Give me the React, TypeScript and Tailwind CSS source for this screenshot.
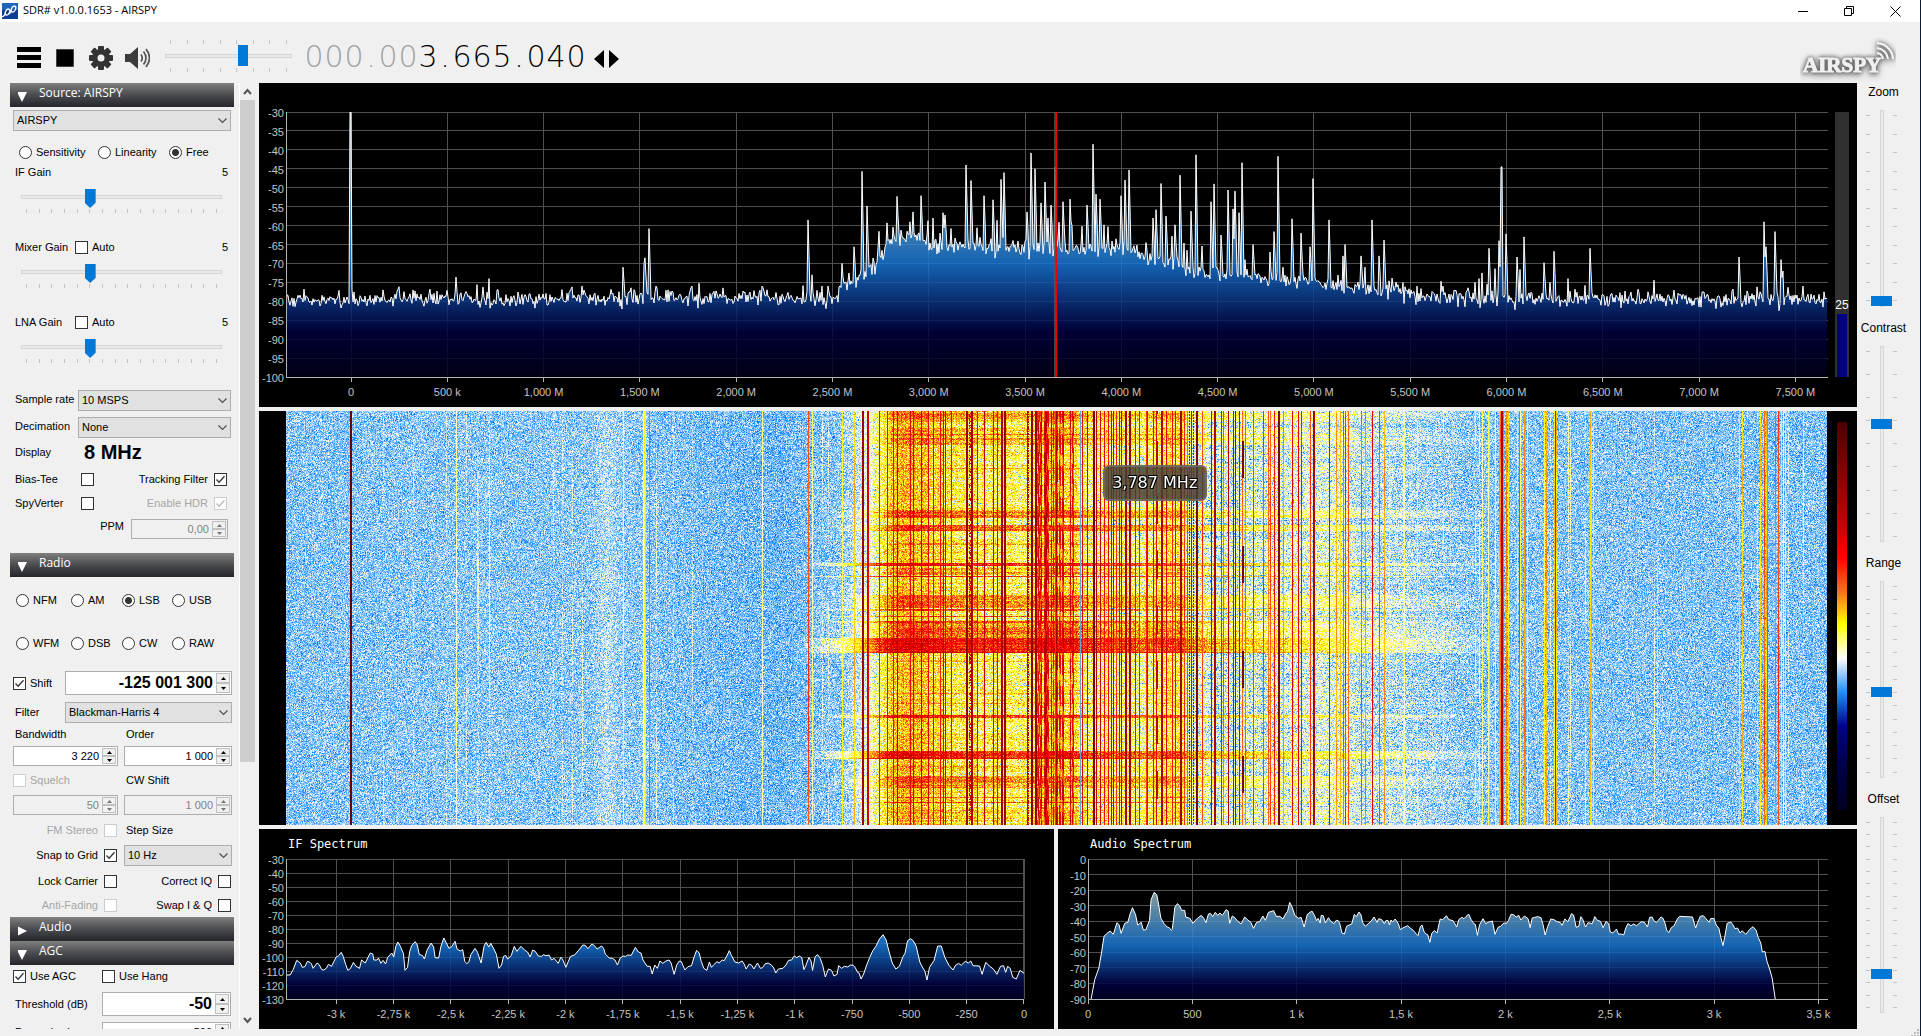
// SDR# main window: source/radio sidebar, spectrum, waterfall, IF and audio views

import React, { useEffect, useMemo, useRef, useState } from 'react';

const PLOT_X = 286;
const PLOT_W = 1542;
const FALL_W = 1541;
const FALL_H = 414;

type Point = [number, number];

// carriers: [column, dB]
const PEAKS: Point[] = [
    [383, -77], [413, -77], [456, -73.6], [477, -75.6], [489, -74], [572, -76.2], [582, -76], [623, -71], [644, -70],
    [645, -68.5], [649, -60.8], [656, -76], [692, -76], [762, -76], [808, -58.5], [812, -73], [822, -76], [828, -76],
    [842, -70], [854, -65.6], [862, -45.7], [867, -54.8], [879, -61.5], [887, -59.3], [893, -60.4], [897, -52.3],
    [910, -59], [913, -56.4], [921, -52.1], [928, -58.7], [933, -58], [940, -62], [943, -56.6], [945, -57.2],
    [951, -60.8], [966, -44], [971, -48.1], [977, -60.6], [984, -52.1], [993, -53.2], [997, -58.6], [1001, -47.8],
    [1004, -46], [1027, -56.4], [1031, -40.8], [1035, -45], [1041, -54], [1045, -48.5], [1048, -58], [1051, -54.6],
    [1055, -44.5], [1059, -59.1], [1063, -53.7], [1070, -53], [1072, -60], [1082, -60.2], [1087, -54.6], [1093, -38.5],
    [1096, -51.7], [1100, -53], [1104, -59.8], [1108, -60.3], [1116, -63.5], [1121, -52.1], [1125, -48], [1129, -45.3],
    [1146, -64.5], [1153, -58], [1156, -55.8], [1161, -48.9], [1166, -57.5], [1172, -62.8], [1175, -59.8], [1180, -46.7],
    [1184, -64.6], [1187, -66.5], [1191, -56.2], [1196, -41.3], [1202, -65.4], [1211, -53.7], [1214, -49],
    [1221, -62.5], [1228, -50.6], [1233, -55.6], [1235, -50.9], [1239, -56.6], [1242, -43.4], [1245, -69], [1253, -65],
    [1270, -67], [1274, -61.6], [1278, -41.7], [1283, -71], [1292, -58.2], [1301, -62], [1310, -65.6], [1313, -47.6],
    [1329, -58.5], [1343, -68], [1345, -65], [1361, -68], [1365, -71], [1372, -58.5], [1379, -68], [1384, -63.8],
    [1389, -74.6], [1403, -75], [1417, -76], [1443, -76], [1475, -75], [1479, -74], [1482, -72.5], [1489, -66],
    [1495, -71.4], [1499, -64], [1501, -44.5], [1506, -62.2], [1517, -68.3], [1520, -71.6], [1524, -63], [1544, -69.8],
    [1550, -75], [1554, -66.8], [1568, -74], [1585, -75.8], [1590, -66], [1654, -74.4], [1739, -68.3], [1757, -76.2],
    [1764, -59], [1766, -65.6], [1775, -61.6], [1781, -69], [1783, -72], [1788, -76.3], [1803, -76],
];

const FLOOR: Point[] = [
    [286, -79.5], [836, -79], [844, -75], [857, -74.5], [869, -72.5], [877, -70], [884, -67], [892, -64], [902, -63],
    [917, -63], [931, -65.3], [1040, -66], [1117, -66], [1142, -68], [1167, -69.5], [1193, -72], [1244, -73.5],
    [1295, -74.5], [1346, -76], [1397, -77.5], [1423, -78.6], [1500, -79.3], [1830, -79.6],
];

const FALL_FLOOR: Point[] = [
    [286, -79.4], [590, -79.2], [607, -77.6], [622, -79], [700, -79.8], [780, -80.2], [840, -79.2], [858, -77],
    [872, -74.5], [884, -70], [892, -66], [905, -65], [922, -66], [950, -69.5], [1030, -72], [1038, -68], [1074, -68],
    [1082, -72], [1150, -72.5], [1168, -69], [1180, -70], [1192, -75], [1250, -76.5], [1345, -76], [1360, -77.5],
    [1400, -78], [1470, -79.3], [1830, -79.6],
];

// columns that only show up in the waterfall
const FAINT: Point[] = [
    [446, -77.5], [456, -75], [466, -77], [478, -76], [489, -77], [553, -77.4], [562, -77], [623, -73.5], [643, -73],
    [644, -70], [645, -72], [649, -66], [656, -75.5], [673, -77], [762, -73.5], [842, -72], [868, -58], [1348, -68],
    [1404, -73], [1488, -72], [1500, -62], [1503, -61], [1508, -68], [1519, -59], [1525, -63], [1527, -70],
    [1546, -64], [1555, -53], [1556, -66], [1570, -74], [1591, -66], [1593, -68], [1657, -77], [1742, -66],
    [1760, -67], [1767, -60], [1778, -58], [1785, -70], [1336, -72], [1340, -74], [1223, -68], [1263, -66],
    [1298, -58], [1268, -69], [1181, -50], [1135, -60], [1139, -62], [1111, -55], [1113, -52], [1119, -57], [1147, -58],
];

// static crashes: [first row, last row, gain in dB]
const BURSTS: [number, number, number][] = [
    [0, 10, 4], [3, 4, 4], [17, 33, 4], [23, 23, 5], [27, 28, 5], [57, 57, 3], [99, 106, 7], [104, 105, 4],
    [114, 119, 8], [132, 133, 5], [138, 142, 2], [152, 154, 15], [157, 163, 5], [165, 165, 15], [184, 196, 7],
    [190, 191, 4], [198, 199, 11], [205, 205, 10], [210, 211, 12], [212, 226, 7], [217, 220, 6], [227, 236, 14],
    [237, 241, 13], [238, 238, 6], [241, 241, 10], [250, 250, 3], [282, 282, 5], [292, 292, 4], [304, 306, 11],
    [340, 346, 13], [347, 347, 15], [352, 360, 3], [365, 376, 6], [370, 371, 4], [386, 386, 7], [391, 391, 9],
    [396, 414, 2],
];

const RAMP: [number, number, number][] = [
    [0, 0, 32], [0, 0, 48], [0, 0, 80], [0, 0, 145], [30, 144, 255], [255, 255, 255], [255, 255, 0],
    [254, 109, 22], [255, 0, 0], [198, 0, 0], [159, 0, 0], [117, 0, 0], [74, 0, 0],
];

const IF_TRACE =
    '62,466 70,466 76,450 83,422 90,430 94,443 99,441 104,425 109,428 112,433 115,446 123,430 127,435 132,450 136,451 141,446 145,434 151,440 156,425 160,413 165,408 170,398 174,410 179,435 183,452 188,447 194,428 199,440 206,446 210,421 217,430 222,415 227,400 232,403 234,421 240,421 243,415 248,431 252,422 257,433 261,413 269,400 273,412 277,380 281,367 286,380 292,402 295,452 300,443 304,396 308,378 315,366 319,376 323,405 329,407 333,418 338,392 346,370 351,382 354,414 361,415 365,382 371,355 376,370 381,386 387,380 393,365 397,388 403,394 408,390 412,425 416,432 420,427 424,405 432,386 437,398 444,430 450,378 454,368 459,382 463,371 469,388 474,404 479,446 484,436 488,410 492,407 496,418 503,408 509,380 514,395 522,380 529,391 535,397 540,412 545,391 550,395 556,409 562,410 566,405 571,408 577,406 582,421 587,416 595,431 600,413 603,417 610,443 615,425 619,410 627,406 635,392 643,376 648,377 653,387 661,373 666,378 671,388 680,379 684,386 687,403 695,415 701,416 706,421 711,436 716,416 722,409 727,410 731,406 738,407 746,383 752,397 757,400 761,421 769,440 775,440 779,463 784,436 789,446 794,424 800,431 806,424 812,421 816,430 822,464 827,436 832,424 836,426 843,451 849,441 856,438 861,412 866,392 871,400 875,425 880,446 886,452 891,427 895,443 899,436 906,426 910,430 916,421 920,423 926,406 930,393 934,407 941,427 948,430 955,424 959,433 963,448 969,433 974,437 978,448 985,430 991,446 995,444 1000,433 1006,430 1013,437 1017,445 1021,460 1026,448 1035,446 1041,436 1046,422 1052,421 1057,409 1062,414 1067,409 1072,414 1076,450 1080,437 1086,413 1090,424 1093,452 1098,411 1103,405 1108,416 1113,438 1118,472 1124,448 1130,452 1135,469 1141,464 1144,438 1150,446 1155,440 1162,442 1167,436 1173,437 1177,445 1181,458 1184,460 1188,478 1193,463 1199,436 1205,413 1211,393 1217,380 1224,358 1231,345 1237,361 1243,397 1249,430 1256,448 1263,440 1270,411 1274,401 1279,363 1285,357 1290,363 1296,380 1303,427 1309,445 1313,455 1317,481 1322,443 1331,422 1338,379 1345,379 1352,413 1360,437 1368,451 1373,437 1379,431 1384,437 1392,425 1398,430 1403,424 1407,438 1420,439 1425,464 1432,428 1440,440 1447,448 1454,464 1461,440 1467,438 1471,458 1475,440 1480,446 1485,473 1492,478 1499,452 1507,461';

const AUDIO_TRACE =
    '81,538 88,480 96,445 101,400 106,350 112,341 118,334 124,344 131,309 135,315 139,341 146,311 152,308 156,285 161,264 167,285 171,316 178,308 182,331 187,330 194,302 197,240 203,218 208,225 211,250 216,296 222,312 228,322 232,324 236,332 238,329 243,262 248,252 252,258 256,272 262,272 264,292 272,296 278,311 285,298 294,287 299,296 303,309 308,283 312,281 316,291 321,278 326,287 330,280 335,287 342,270 346,274 349,311 354,289 359,294 364,304 371,313 378,292 384,301 390,308 395,326 401,308 407,306 413,289 418,302 424,278 434,273 439,290 446,290 452,298 457,283 461,275 465,248 470,263 475,287 482,296 487,293 493,322 499,284 508,274 513,287 517,303 520,296 524,310 526,287 530,288 534,310 540,294 545,306 551,312 555,302 559,303 562,312 566,340 571,343 575,320 580,316 585,313 590,284 594,291 599,277 603,286 606,308 611,320 617,312 623,304 628,292 634,308 637,297 643,300 648,312 651,303 655,302 658,316 661,301 664,307 669,298 675,312 679,330 686,323 693,318 698,325 704,332 708,340 713,348 718,320 721,316 725,337 729,343 732,345 736,368 740,340 745,333 750,340 756,298 761,300 768,288 773,300 781,303 788,322 792,300 798,293 802,297 811,283 816,300 821,312 824,314 828,347 832,316 839,297 844,312 850,307 857,304 862,344 868,323 873,320 879,310 884,311 888,303 893,284 898,285 903,292 908,287 912,301 919,289 926,297 930,324 934,295 939,293 945,291 951,294 955,315 959,346 964,320 970,298 976,300 982,306 988,308 992,317 997,298 1003,306 1010,282 1014,286 1019,323 1024,320 1028,291 1032,300 1037,322 1042,309 1050,312 1055,291 1060,302 1066,305 1071,324 1077,305 1082,313 1085,337 1090,340 1097,328 1101,344 1106,343 1111,346 1115,325 1119,312 1125,318 1130,313 1136,318 1145,306 1151,308 1157,322 1161,293 1166,292 1169,303 1174,308 1178,302 1183,292 1187,296 1191,311 1194,331 1198,339 1203,324 1208,319 1215,297 1219,290 1244,292 1250,325 1254,308 1259,290 1265,288 1270,297 1276,308 1279,297 1285,296 1290,316 1295,326 1299,355 1303,378 1307,346 1311,311 1318,307 1322,315 1326,327 1331,325 1336,340 1340,333 1347,344 1354,330 1361,321 1367,332 1371,353 1376,370 1379,397 1384,395 1388,425 1393,448 1398,475 1404,538';

const createRandom = (seed: number) => () => {
    seed = (seed + 0x6d2b79f5) | 0;
    let t = Math.imul(seed ^ (seed >>> 15), 1 | seed);
    t = (t + Math.imul(t ^ (t >>> 7), 61 | t)) ^ t;
    return ((t ^ (t >>> 14)) >>> 0) / 4294967296;
};

const interpolate = (points: Point[], x: number) => {
    for (let i = 1; i < points.length; i++) {
        if (x <= points[i][0]) {
            const [x0, y0] = points[i - 1];
            const [x1, y1] = points[i];
            return y0 + ((y1 - y0) * (x - x0)) / (x1 - x0);
        }
    }
    return points[points.length - 1][1];
};

const buildSpectrum = () => {
    const random = createRandom(1653);
    const gauss = () => random() + random() + random() - 1.5;
    const levels: number[] = [];
    for (let x = 0; x < PLOT_W; x++) {
        levels.push(interpolate(FLOOR, x + PLOT_X) + gauss() * 2.2 + (random() > 0.95 ? 1.6 : 0));
    }
    PEAKS.forEach(([px, db]) => {
        const x = px - PLOT_X;
        levels[x] = db;
        const floor = interpolate(FLOOR, px);
        if (db > floor + 8) {
            levels[x + 1] = Math.max(levels[x + 1], floor + (db - floor) * 0.55);
        }
    });
    levels[350 - PLOT_X] = -30;
    levels[351 - PLOT_X] = -30;
    levels[1242 - PLOT_X] = -43.4;
    levels[1502 - PLOT_X] = -44.5;
    return levels.map((db, x) => `${x},${(((-30 - db) / 70) * 265).toFixed(1)}`).join(' ');
};

const paintWaterfall = (ctx: CanvasRenderingContext2D) => {
    const random = createRandom(3787);
    const gauss = () => random() + random() + random() + random() - 2;
    const image = ctx.createImageData(FALL_W, FALL_H);

    const base: number[] = [];
    const line: number[] = new Array(FALL_W).fill(-200);
    const phase: number[] = [];
    const period: number[] = [];
    for (let x = 0; x < FALL_W; x++) {
        const px = x + PLOT_X;
        const busy = px > 880 && px < 1300 ? 1 : 0;
        base.push(interpolate(FALL_FLOOR, px) + busy * (random() - 0.5) * 3);
        phase.push(random() * 6.28);
        period.push(14 + random() * 50);
    }
    [...PEAKS, ...FAINT].forEach(([px, db]) => {
        const x = px - PLOT_X;
        const level = px > 860 && px < 1380 ? db + 8 : db;
        line[x] = Math.max(line[x], level);
        if (db > -50) line[x + 1] = Math.max(line[x + 1], level - 2);
    });
    // strong broadcast carriers around the tuned band
    for (let px = 1037; px < 1078; px++) {
        const chance = px < 1062 ? 0.55 : 0.75;
        if (random() > chance) line[px - PLOT_X] = Math.max(line[px - PLOT_X], -57 + random() * 12);
    }

    for (let y = 0; y < FALL_H; y++) {
        const rowJitter = gauss() * 2.6;
        let gain = 0;
        let widest = 0;
        BURSTS.forEach(([from, to, g]) => {
            if (y >= from && y <= to) {
                gain = Math.max(gain, g) + (gain ? Math.min(gain, g) * 0.3 : 0);
                widest = Math.max(widest, g);
            }
        });
        const left = 876 - widest * 4;
        for (let x = 0; x < FALL_W; x++) {
            const px = x + PLOT_X;
            const rise = Math.min(1, Math.max(0, (px - left + 40) / 100));
            const fall = px < 1080 ? 1 : px < 1320 ? 1 - (px - 1080) / 440 : Math.max(0, 0.455 - (px - 1320) / 420);
            const env = rise * rise * fall;
            const busy = px > 872 ? fall : 0;
            let db = base[x] + (gain * 1.1 + rowJitter) * env + gauss() * (4 + busy * 2.4);
            if (line[x] > -74) {
                const wobble = Math.sin(y / period[x] + phase[x]) * 1.8;
                let level = line[x] + wobble + gauss() * 2;
                if (px > 1036 && px < 1078 && Math.sin(y / 5 + phase[x] * 3) > 0.4) level -= 12;
                db = Math.max(db, level);
            } else if (line[x] > -150) {
                // weak carriers stay buried in the noise
                db += (line[x] + 79.4) * (0.6 + 0.5 * Math.sin(y / period[x] + phase[x]));
            }
            // keyed carriers
            if (px === 1242 || px === 1243) {
                if ((y + 38) % 105 < 68) db = px === 1243 ? -72 + gauss() * 6 : -60 + gauss() * 3;
                else db = -34;
            }
            if (px === 1156 || px === 1157) db = (y + 25) % 55 < 28 ? -44 : db - 2;
            if ((px === 1189 || px === 1193) && y % 3 < 2) db = -44;
            if ((px === 1027 || px === 1028) && (y * 7) % 17 < 11) db = -42;
            if ((px === 969 || px === 970) && random() > 0.5) db = -46;
            if (px === 350 || px === 351) db = -30;
            if (px === 1501 || px === 1502) db = Math.max(db, -44);

            const pos = Math.min(11.99, Math.max(0, 4.47 + ((db + 79.4) * 0.012) / 0.087));
            const i = Math.floor(pos);
            const f = pos - i;
            const at = (y * FALL_W + x) * 4;
            for (let c = 0; c < 3; c++) {
                image.data[at + c] = RAMP[i][c] + (RAMP[i + 1][c] - RAMP[i][c]) * f;
            }
            image.data[at + 3] = 255;
            if (px === 1080) image.data.set([96, 170, 200, 255], at);
            if (px === 1055) image.data.set([120, 96, 96, 255], at);
        }
    }
    ctx.putImageData(image, 0, 0);
};

interface PlotProps {
    id: string;
    viewBox: string;
    points: string;
    base: number;
    yLabels: number[];
    xTicks: { at: number; label: string }[];
    stops: [string, string][];
    closed?: boolean;
    marker?: number;
}

const Plot: React.FC<PlotProps> = ({ id, viewBox, points, base, yLabels, xTicks, stops, closed, marker }) => {
    const [, y0, , h] = viewBox.split(' ').map(Number);
    const first = points.split(' ')[0].split(',')[0];
    const last = points.split(' ').slice(-1)[0].split(',')[0];
    return (
        <svg className="h-full min-w-0 flex-1 overflow-visible font-['Liberation_Sans',sans-serif] text-[11px]">
            <defs>
                <linearGradient id={id} gradientUnits="userSpaceOnUse" x1="0" x2="0" y1={y0} y2={y0 + h}>
                    {stops.map(([offset, color]) => <stop key={offset} offset={offset} stopColor={color} />)}
                </linearGradient>
            </defs>
            <g stroke="#505050" shapeRendering="crispEdges">
                {yLabels.map((v, i) => {
                    const y = `${(i / (yLabels.length - 1)) * 100}%`;
                    return <line key={v} x1="0" x2="100%" y1={y} y2={y} />;
                })}
                {xTicks.map((t) => <line key={t.label} x1={`${t.at}%`} x2={`${t.at}%`} y1="0" y2="100%" />)}
                {closed && <line x1="100%" x2="100%" y1="0" y2="100%" />}
            </g>
            <svg viewBox={viewBox} preserveAspectRatio="none" width="100%" height="100%">
                <polygon points={`${first},${base} ${points} ${last},${base}`} fill={`url(#${id})`} fillOpacity="0.84" />
                <polyline points={points} fill="none" stroke="#fff" strokeWidth="1" vectorEffect="non-scaling-stroke" />
            </svg>
            <g stroke="#b4b4b4" shapeRendering="crispEdges">
                <line x1="0" x2="0" y1="0" y2="100%" />
                <line x1="0" x2="100%" y1="100%" y2="100%" />
            </g>
            {marker !== undefined && (
                <g>
                    <line x1={`${marker - 0.08}%`} x2={`${marker - 0.08}%`} y1="0" y2="100%" stroke="#5a5a5a" strokeWidth="1.5" />
                    <line x1={`${marker}%`} x2={`${marker}%`} y1="0" y2="100%" stroke="#f00000" strokeWidth="1.5" />
                </g>
            )}
            <g fill="#c4c4c4" textAnchor="end">
                {yLabels.map((v, i) => (
                    <text key={v} x="-2" y={`${(i / (yLabels.length - 1)) * 100}%`} dy="5">{v}</text>
                ))}
            </g>
            <svg y="100%" className="overflow-visible" fill="#c4c4c4" textAnchor="middle">
                {xTicks.map((t) => (
                    <g key={t.label}>
                        <line x1={`${t.at}%`} x2={`${t.at}%`} y1="0" y2="5" stroke="#b4b4b4" shapeRendering="crispEdges" />
                        <text x={`${t.at}%`} y="19">{t.label}</text>
                    </g>
                ))}
            </svg>
        </svg>
    );
};

const Waterfall: React.FC = () => {
    const ref = useRef<HTMLCanvasElement>(null);

    useEffect(() => {
        const ctx = ref.current?.getContext('2d');
        if (ctx) paintWaterfall(ctx);
    }, []);

    return (
        <div className="flex min-h-0 bg-black pl-[27px]">
            <div className="relative min-w-0 flex-1">
                <canvas ref={ref} width={FALL_W} height={FALL_H} className="absolute inset-0 h-full w-full [image-rendering:pixelated]" />
                <div className="absolute left-[53%] top-[13%] flex h-9 w-[104px] items-center justify-center rounded-md border-2 border-[#77706a]/80 bg-[#484038]/85 font-['DejaVu_Sans',sans-serif] text-[16px] text-white [text-shadow:1px_1px_0_#000,-1px_-1px_0_#000,1px_-1px_0_#000,-1px_1px_0_#000]">
                    3,787 MHz
                </div>
            </div>
            <div className="mx-[10px] mb-[15px] mt-[11px] w-[10px] bg-[linear-gradient(to_bottom,#4a0000_0%,#750000_8.7%,#9f0000_17.4%,#c60000_26.1%,#ff0000_34.8%,#fe6d16_43.5%,#ffff00_52.2%,#ffffff_60.9%,#1e90ff_69.6%,#000091_78.3%,#000050_87%,#000020_100%)]" />
        </div>
    );
};

const Header: React.FC<{ title: string; open?: boolean }> = ({ title, open }) => (
    <button className="flex h-6 w-full items-center bg-linear-to-b from-[#808080] via-[#4b4c50] to-[#24262b] pl-2 font-['Open_Sans',sans-serif] text-[12px] leading-none text-white">
        <svg className="mt-1 h-[10px] w-[21px] shrink-0" viewBox="0 0 21 10">
            {open ? <path d="M-1 0h10l-5 10z" fill="#fff" /> : <path d="M-1 0l10 5-10 5z" fill="#fff" />}
        </svg>
        <span className="pb-1">{title}</span>
    </button>
);

interface CheckProps {
    label: string;
    checked?: boolean;
    disabled?: boolean;
    before?: boolean;
}

const Check: React.FC<CheckProps> = ({ label, checked, disabled, before }) => {
    const [on, setOn] = useState(!!checked);
    return (
        <label className={`flex items-center gap-1 whitespace-nowrap ${before ? 'flex-row-reverse gap-[6px]' : ''} ${disabled ? 'text-[#a6a6a6]' : ''}`}>
            <span className="relative h-[13px] w-[13px] shrink-0">
                <input
                    type="checkbox"
                    checked={on}
                    disabled={disabled}
                    onChange={() => setOn(!on)}
                    className="block h-[13px] w-[13px] appearance-none border border-[#333] bg-white disabled:border-[#ccc]"
                />
                {on && (
                    <svg className="pointer-events-none absolute inset-0" viewBox="0 0 13 13" fill="none" stroke={disabled ? '#bbb' : '#333'} strokeWidth="1.3">
                        <path d="M2.500 6.500l2.600 2.800 5.400-6" />
                    </svg>
                )}
            </span>
            {label}
        </label>
    );
};

// checkbox without its label next to it
const Box: React.FC<{ id: string }> = ({ id }) => (
    <input id={id} type="checkbox" className="block h-[13px] w-[13px] shrink-0 appearance-none border border-[#333] bg-white checked:bg-[#333]" />
);

const Radio: React.FC<{ name: string; label: string; checked?: boolean }> = ({ name, label, checked }) => (
    <label className="flex items-center gap-1 whitespace-nowrap">
        <input
            type="radio"
            name={name}
            defaultChecked={checked}
            className="h-[13px] w-[13px] shrink-0 appearance-none rounded-full border border-[#333] bg-white checked:bg-[radial-gradient(circle,#333_0_3px,#fff_4px)]"
        />
        {label}
    </label>
);

const Select: React.FC<{ id: string; value: string; className?: string }> = ({ id, value, className }) => (
    <div className={`relative h-[21px] ${className ?? ''}`}>
        <select id={id} aria-label={id} className="h-full w-full appearance-none border border-[#adadad] bg-[#e1e1e1] pl-[3px]">
            <option>{value}</option>
        </select>
        <svg className="pointer-events-none absolute right-1 top-2 h-[6px] w-[9px]" viewBox="0 0 9 6" fill="none" stroke="#505050" strokeWidth="1.2">
            <path d="M.5.5l4 4 4-4" />
        </svg>
    </div>
);

interface SpinProps {
    id: string;
    value: string;
    disabled?: boolean;
    large?: boolean;
    className?: string;
}

const Spin: React.FC<SpinProps> = ({ id, value, disabled, large, className }) => (
    <div className={`flex min-w-0 border border-[#adadad] p-px ${disabled ? 'bg-[#f0f0f0] text-[#838383]' : 'bg-white'} ${large ? 'h-6' : 'h-5'} ${className ?? ''}`}>
        <input
            id={id}
            aria-label={id}
            defaultValue={value}
            disabled={disabled}
            className={`w-full min-w-0 flex-1 bg-transparent pr-[3px] text-right ${large ? 'text-[16px] font-bold' : ''}`}
        />
        <div className="flex w-[14px] shrink-0 flex-col">
            <button aria-label={`${id} up`} disabled={disabled} className="flex flex-1 items-center justify-center border border-[#c0c0c0] bg-[#f0f0f0]">
                <svg className="h-[3px] w-[5px]" viewBox="0 0 5 3"><path d="M0 3L2.500 0 5 3z" fill={disabled ? '#777' : '#000'} /></svg>
            </button>
            <button aria-label={`${id} down`} disabled={disabled} className="flex flex-1 items-center justify-center border border-[#c0c0c0] bg-[#f0f0f0]">
                <svg className="h-[3px] w-[5px]" viewBox="0 0 5 3"><path d="M0 0h5L2.500 3z" fill={disabled ? '#777' : '#000'} /></svg>
            </button>
        </div>
    </div>
);

const Ticks: React.FC<{ count: number; className: string; tick: string }> = ({ count, className, tick }) => (
    <div className={`flex justify-between ${className}`}>
        {Array.from({ length: count }, (_, i) => <i key={i} className={`bg-[#c4c4c4] ${tick}`} />)}
    </div>
);

const Gain: React.FC<{ label: string; auto?: boolean }> = ({ label, auto }) => (
    <div className="flex h-[75px] flex-col">
        <div className="flex h-[19px] items-end justify-between pl-[2px] pr-[3px]">
            <div className="flex items-end">
                <label htmlFor={label} className="w-[60px]">{label}</label>
                {auto && <Check label="Auto" />}
            </div>
            <span>5</span>
        </div>
        <input
            id={label}
            type="range"
            min="0"
            max="15"
            defaultValue="5"
            className="ml-2 mr-[9px] mt-[9px] h-4 appearance-none bg-transparent [&::-webkit-slider-runnable-track]:h-1 [&::-webkit-slider-runnable-track]:border [&::-webkit-slider-runnable-track]:border-[#d6d6d6] [&::-webkit-slider-runnable-track]:bg-[#e7eaea] [&::-webkit-slider-thumb]:-mt-[7px] [&::-webkit-slider-thumb]:h-[19px] [&::-webkit-slider-thumb]:w-[11px] [&::-webkit-slider-thumb]:appearance-none [&::-webkit-slider-thumb]:bg-[#0078d7] [&::-webkit-slider-thumb]:[clip-path:polygon(0_0,100%_0,100%_72%,50%_100%,0_72%)]"
        />
        <Ticks count={16} className="ml-[13px] mr-[14px] mt-1" tick="h-1 w-px" />
    </div>
);

interface SideSliderProps {
    label: string;
    value: number;
    ticks: number;
}

const SideSlider: React.FC<SideSliderProps> = ({ label, value, ticks }) => (
    <div className="flex min-h-0 flex-1 flex-col items-center">
        <label htmlFor={label} className="h-[27px] pt-[2px] text-[12px] leading-[15px]">{label}</label>
        <div className="mb-3 flex min-h-0 flex-1 pr-1">
            <Ticks count={ticks} className="my-[5px] flex-col" tick="h-px w-[4px]" />
            <input
                id={label}
                type="range"
                min="0"
                max="1000"
                defaultValue={value}
                className="h-full w-[23px] appearance-none bg-transparent [direction:rtl] [writing-mode:vertical-lr] [&::-webkit-slider-runnable-track]:w-1 [&::-webkit-slider-runnable-track]:border [&::-webkit-slider-runnable-track]:border-[#d6d6d6] [&::-webkit-slider-runnable-track]:bg-[#e7eaea] [&::-webkit-slider-thumb]:-ml-[10px] [&::-webkit-slider-thumb]:h-[10px] [&::-webkit-slider-thumb]:w-[21px] [&::-webkit-slider-thumb]:appearance-none [&::-webkit-slider-thumb]:bg-[#0078d7]"
            />
            <Ticks count={ticks} className="my-[5px] flex-col" tick="h-px w-[4px]" />
        </div>
    </div>
);

const Logo: React.FC = () => (
    <svg className="mr-6 h-12 w-24" viewBox="0 0 96 48">
        <g className="[filter:drop-shadow(0_0_2px_#444)_drop-shadow(0_2px_3px_#888)]">
            <text x="3" y="38" fill="#f0f0f0" stroke="#f0f0f0" strokeWidth="1" fontSize="21" fontWeight="bold" fontFamily="Liberation Serif, serif">AIRSPY</text>
            <g fill="none" stroke="#f6f6f6" strokeWidth="2">
                <path d="M77 19a7 7 0 0 1 6 6" />
                <path d="M77 14a12 12 0 0 1 11 11" />
                <path d="M77 9a17 17 0 0 1 16 16" />
            </g>
        </g>
    </svg>
);

const Toolbar: React.FC = () => (
    <div className="flex h-[61px] shrink-0 items-start pt-3">
        <button aria-label="Menu" className="ml-[17px] mt-[13px]">
            <svg width="24" height="21" viewBox="0 0 24 21"><path d="M0 0h24v5H0zM0 8h24v5H0zM0 16h24v5H0z" /></svg>
        </button>
        <button aria-label="Stop" className="ml-[15px] mt-[15px]">
            <svg width="18" height="18" viewBox="0 0 18 18"><path d="M.5.5h17v17H.5z" stroke="#444" /></svg>
        </button>
        <button aria-label="Settings" className="ml-[15px] mt-3">
            <svg width="24" height="24" viewBox="0 0 24 24" fill="#333">
                {[0, 45, 90, 135].map((a) => <rect key={a} x="9" y="0" width="6" height="24" rx="1" transform={`rotate(${a} 12 12)`} />)}
                <circle cx="12" cy="12" r="9" />
                <circle cx="12" cy="12" r="3.500" fill="#f0f0f0" />
            </svg>
        </button>
        <button aria-label="Mute" className="ml-3 mt-3">
            <svg width="25" height="24" viewBox="0 0 25 24" fill="none" stroke="#555" strokeWidth="1.7">
                <path d="M0 8h5l8-7v22l-8-7H0z" fill="#3c3c3c" stroke="none" />
                <path d="M16 8.500q2.500 3.500 0 7M18.500 5.500q5 6.500 0 13M21 3q7 9 0 18" />
            </svg>
        </button>
        <div className="ml-[15px] mt-[6px] flex w-[127px] flex-col">
            <Ticks count={8} className="mx-[5px]" tick="h-1 w-px" />
            <input
                type="range"
                aria-label="Volume"
                min="0"
                max="100"
                defaultValue="63"
                className="my-[5px] h-[14px] appearance-none bg-transparent [&::-webkit-slider-runnable-track]:h-1 [&::-webkit-slider-runnable-track]:border [&::-webkit-slider-runnable-track]:border-[#d6d6d6] [&::-webkit-slider-runnable-track]:bg-[#e7eaea] [&::-webkit-slider-thumb]:-mt-[10px] [&::-webkit-slider-thumb]:h-[21px] [&::-webkit-slider-thumb]:w-[10px] [&::-webkit-slider-thumb]:appearance-none [&::-webkit-slider-thumb]:bg-[#0078d7]"
            />
            <Ticks count={8} className="mx-[5px]" tick="h-1 w-px" />
        </div>
        <div className="ml-3 mt-[3px] flex font-['DejaVu_Sans','Open_Sans',sans-serif] text-[30px] font-extralight leading-[40px]">
            {'000.003.665.040'.split('').map((c, i) => (
                <span key={i} className={`text-center ${c === '.' ? 'w-[14px]' : 'w-5'} ${i < 6 ? 'text-[#a0a0a0]' : 'text-black'}`}>{c}</span>
            ))}
        </div>
        <button aria-label="Frequency step" className="ml-2 mt-4">
            <svg width="26" height="18" viewBox="0 0 26 18"><path d="M10 0v18L0 9zM15 0v18l10-9z" /></svg>
        </button>
        <div className="ml-auto"><Logo /></div>
    </div>
);

const TitleBar: React.FC = () => (
    <div className="flex h-[22px] shrink-0 items-center bg-white pl-[2px] font-['Open_Sans',sans-serif] text-[11px]">
        <svg width="16" height="16" viewBox="0 0 16 16">
            <rect width="16" height="16" fill="#0b3f94" />
            <rect width="16" height="7" fill="#1f66b8" />
            <g fill="none" stroke="#fff" strokeWidth="1.300">
                <path d="M0 14q3-1 3.500-4" />
                <ellipse cx="5.500" cy="9" rx="2" ry="3.200" transform="rotate(25 5.500 9)" />
                <path d="M7 11q2-1 2.500-4" />
                <ellipse cx="11.500" cy="6" rx="2" ry="3.200" transform="rotate(25 11.500 6)" />
            </g>
        </svg>
        <span className="ml-[5px] flex-1 pb-[2px]">SDR# v1.0.0.1653 - AIRSPY</span>
        <button aria-label="Minimize" className="flex w-[46px] justify-center"><svg width="11" height="11" stroke="#000"><path d="M0 5.500h10" /></svg></button>
        <button aria-label="Restore" className="flex w-[46px] justify-center">
            <svg width="11" height="11" fill="none" stroke="#000"><path d="M.5 2.500h7v7h-7zM2.500 2.500v-2h7v7h-2" /></svg>
        </button>
        <button aria-label="Close" className="mr-[2px] flex w-[46px] justify-center">
            <svg width="11" height="11" stroke="#000"><path d="M.5.5l10 10M10.500.5l-10 10" /></svg>
        </button>
    </div>
);

const Sidebar: React.FC = () => (
    <div className="flex w-[259px] shrink-0 pr-1">
        <div className="w-[239px] overflow-hidden pl-[10px] pr-[5px] text-[11px] leading-[15px]">
            <Header title="Source: AIRSPY" open />
            <div className="pl-[3px] pr-[3px]">
                <Select id="Device" value="AIRSPY" className="mt-[3px]" />
                <div className="mt-[12px] flex h-[18px] items-center pl-[6px]">
                    <div className="w-[79px]"><Radio name="gain" label="Sensitivity" /></div>
                    <div className="w-[71px]"><Radio name="gain" label="Linearity" /></div>
                    <Radio name="gain" label="Free" checked />
                </div>
                <Gain label="IF Gain" />
                <Gain label="Mixer Gain" auto />
                <Gain label="LNA Gain" auto />
                <div className="mt-1 flex items-start pl-[2px]">
                    <label htmlFor="rate" className="w-[63px] pt-[2px]">Sample rate</label>
                    <Select id="rate" value="10 MSPS" className="flex-1" />
                </div>
                <div className="mt-[6px] flex items-start pl-[2px]">
                    <label htmlFor="decimation" className="w-[63px] pt-[2px]">Decimation</label>
                    <Select id="decimation" value="None" className="flex-1" />
                </div>
                <div className="flex h-[29px] items-center pl-[2px]">
                    <span className="w-[69px]">Display</span>
                    <b className="text-[20px]">8 MHz</b>
                </div>
                <div className="flex h-6 items-center justify-between pl-[2px] pr-1">
                    <div className="flex items-center"><label htmlFor="bias" className="w-[66px]">Bias-Tee</label><Box id="bias" /></div>
                    <Check label="Tracking Filter" checked before />
                </div>
                <div className="flex h-6 items-center justify-between pl-[2px] pr-1">
                    <div className="flex items-center"><label htmlFor="spy" className="w-[66px]">SpyVerter</label><Box id="spy" /></div>
                    <Check label="Enable HDR" checked disabled before />
                </div>
                <div className="mt-1 flex items-start justify-end gap-[7px] pr-[3px]">
                    <label htmlFor="PPM">PPM</label>
                    <Spin id="PPM" value="0,00" disabled className="w-[97px]" />
                </div>
            </div>
            <div className="mt-[14px]"><Header title="Radio" open /></div>
            <div className="pl-[3px] pr-[2px]">
                <div className="grid grid-cols-[55px_51px_50px_1fr] items-center gap-y-7 pb-5 pl-[3px] pt-4">
                    <Radio name="mode" label="NFM" />
                    <Radio name="mode" label="AM" />
                    <Radio name="mode" label="LSB" checked />
                    <Radio name="mode" label="USB" />
                    <Radio name="mode" label="WFM" />
                    <Radio name="mode" label="DSB" />
                    <Radio name="mode" label="CW" />
                    <Radio name="mode" label="RAW" />
                </div>
                <div className="flex items-center">
                    <div className="w-[52px] shrink-0"><Check label="Shift" checked /></div>
                    <Spin id="Shift frequency" value="-125 001 300" large className="flex-1" />
                </div>
                <div className="mt-[7px] flex items-center pl-[2px]">
                    <label htmlFor="filter" className="w-[50px]">Filter</label>
                    <Select id="filter" value="Blackman-Harris 4" className="flex-1" />
                </div>
                <div className="mt-1 grid grid-cols-[105px_108px] gap-x-[6px]">
                    <label htmlFor="bandwidth" className="h-[19px] pl-[2px]">Bandwidth</label>
                    <label htmlFor="order" className="h-[19px] pl-[2px]">Order</label>
                    <Spin id="bandwidth" value="3 220" />
                    <Spin id="order" value="1 000" />
                    <div className="flex h-[29px] items-center"><Check label="Squelch" disabled /></div>
                    <label htmlFor="cwshift" className="pl-[2px] pt-[7px]">CW Shift</label>
                    <Spin id="squelch level" value="50" disabled />
                    <Spin id="cwshift" value="1 000" disabled />
                    <div className="flex h-[30px] items-center justify-end pr-px"><Check label="FM Stereo" disabled before /></div>
                    <label htmlFor="step" className="pl-[2px] pt-2">Step Size</label>
                    <div className="flex items-center justify-end pr-px"><Check label="Snap to Grid" checked before /></div>
                    <Select id="step" value="10 Hz" />
                    <div className="mt-[3px] flex h-6 items-center justify-end pr-px"><Check label="Lock Carrier" before /></div>
                    <div className="mt-[3px] flex h-6 items-center justify-end pr-px"><Check label="Correct IQ" before /></div>
                    <div className="flex h-6 items-center justify-end pr-px"><Check label="Anti-Fading" disabled before /></div>
                    <div className="flex h-6 items-center justify-end pr-px"><Check label="Swap I & Q" before /></div>
                </div>
            </div>
            <Header title="Audio" />
            <Header title="AGC" open />
            <div className="pl-[3px] pr-[3px]">
                <div className="flex h-[23px] items-center">
                    <div className="w-[89px]"><Check label="Use AGC" checked /></div>
                    <Check label="Use Hang" />
                </div>
                <div className="mt-1 flex items-center pl-[2px]">
                    <label htmlFor="threshold" className="w-[87px] shrink-0">Threshold (dB)</label>
                    <Spin id="threshold" value="-50" large className="flex-1" />
                </div>
                <div className="mt-[6px] flex items-center pl-[2px]">
                    <label htmlFor="decay" className="w-[87px] shrink-0">Decay (ms)</label>
                    <Spin id="decay" value="500" className="flex-1" />
                </div>
            </div>
        </div>
        <div className="flex w-4 flex-col border-l border-white">
            <button aria-label="Scroll up" className="flex h-[17px] items-center justify-center">
                <svg width="9" height="7" fill="none" stroke="#555" strokeWidth="2"><path d="M1 6l3.500-4L8 6" /></svg>
            </button>
            <div className="h-[70%] bg-[#cdcdcd]" />
            <button aria-label="Scroll down" className="mt-auto flex h-[17px] items-center justify-center">
                <svg width="9" height="7" fill="none" stroke="#555" strokeWidth="2"><path d="M1 1l3.500 4L8 1" /></svg>
            </button>
        </div>
    </div>
);

const range = (from: number, to: number, step: number) =>
    Array.from({ length: Math.round((to - from) / step) + 1 }, (_, i) => from + i * step);

const RF_TICKS = range(0, 15, 1).map((i) => ({
    at: ((65 + i * 96.29) / PLOT_W) * 100,
    label: i === 0 ? '0' : i === 1 ? '500 k' : `${Math.floor(i / 2)},${i % 2 ? '500' : '000'} M`,
}));

const IF_TICKS = ['-3 k', '-2,75 k', '-2,5 k', '-2,25 k', '-2 k', '-1,75 k', '-1,5 k', '-1,25 k', '-1 k', '-750', '-500', '-250', '0']
    .map((label, i) => ({ at: 6.8 + i * 7.766, label }));

const AUDIO_TICKS = ['0', '500', '1 k', '1,5 k', '2 k', '2,5 k', '3 k', '3,5 k'].map((label, i) => ({ at: i * 14.1, label }));

const App: React.FC = () => {
    const spectrum = useMemo(buildSpectrum, []);

    return (
        <div className="flex h-screen flex-col overflow-hidden border-r border-[#0a1a30] bg-[#f0f0f0] font-['Liberation_Sans',sans-serif] text-black">
            <TitleBar />
            <Toolbar />
            <div className="flex min-h-0 flex-1">
                <Sidebar />

                <main className="grid min-w-0 flex-1 grid-rows-[minmax(0,324fr)_minmax(0,414fr)_minmax(0,200fr)] gap-1">
                    <div className="flex min-h-0 bg-black pb-[30px] pl-[27px] pr-2 pt-[29px]">
                        <Plot
                            id="rf"
                            viewBox={`0 0 ${PLOT_W} 265`}
                            points={spectrum}
                            base={265}
                            yLabels={range(-100, -30, 5).reverse()}
                            xTicks={RF_TICKS}
                            marker={49.95}
                            stops={[['0', '#c8e6fa'], ['0.4', '#5c9fd0'], ['0.57', '#1877d6'], ['0.83', '#000040'], ['1', '#000018']]}
                        />
                        <div className="ml-[7px] flex w-[14px] flex-col bg-[#303030] text-center text-[12px]">
                            <div className="h-[70%]" />
                            <div className="leading-[15px] text-white">25</div>
                            <div className="mx-[2px] mt-px flex-1 bg-[#000080]" />
                        </div>
                    </div>

                    <Waterfall />

                    <div className="grid min-h-0 grid-cols-[795fr_799fr] grid-rows-[minmax(0,1fr)] gap-1">
                        <div className="relative flex min-h-0 bg-black pb-[30px] pl-[27px] pr-[30px] pt-[30px]">
                            <h2 className="absolute left-[29px] top-2 font-['DejaVu_Sans_Mono',monospace] text-[12px] leading-[15px] text-white">IF Spectrum</h2>
                            <Plot
                                id="if"
                                viewBox="62 118 1445 420"
                                points={IF_TRACE}
                                base={538}
                                yLabels={range(-130, -30, 10).reverse()}
                                xTicks={IF_TICKS}
                                closed
                                stops={[['0', '#c8e6fa'], ['0.5', '#3c8fd8'], ['0.62', '#1877d6'], ['0.9', '#000040'], ['1', '#000028']]}
                            />
                        </div>
                        <div className="relative flex min-h-0 bg-black pb-[30px] pl-[30px] pr-[29px] pt-[30px]">
                            <h2 className="absolute left-8 top-2 font-['DejaVu_Sans_Mono',monospace] text-[12px] leading-[15px] text-white">Audio Spectrum</h2>
                            <Plot
                                id="audio"
                                viewBox="75 118 1431 420"
                                points={AUDIO_TRACE}
                                base={538}
                                yLabels={range(-90, 0, 10).reverse()}
                                xTicks={AUDIO_TICKS}
                                stops={[['0', '#dcdcc8'], ['0.28', '#8aaebb'], ['0.62', '#1877d6'], ['0.9', '#000040'], ['1', '#000028']]}
                            />
                        </div>
                    </div>
                </main>

                <aside className="flex w-[63px] shrink-0 flex-col pb-1 pr-[10px]">
                    <SideSlider label="Zoom" value={0} ticks={11} />
                    <SideSlider label="Contrast" value={608} ticks={9} />
                    <SideSlider label="Range" value={430} ticks={15} />
                    <SideSlider label="Offset" value={180} ticks={16} />
                </aside>
            </div>
            <div className="flex h-[7px] shrink-0 justify-end">
                <svg width="10" height="7" fill="#bdbdbd"><path d="M7 0h2v2H7zM4 3h2v2H4zM7 3h2v2H7zM1 6h2v1H1zM4 6h2v1H4zM7 6h2v1H7z" /></svg>
            </div>
        </div>
    );
};

export default App;
